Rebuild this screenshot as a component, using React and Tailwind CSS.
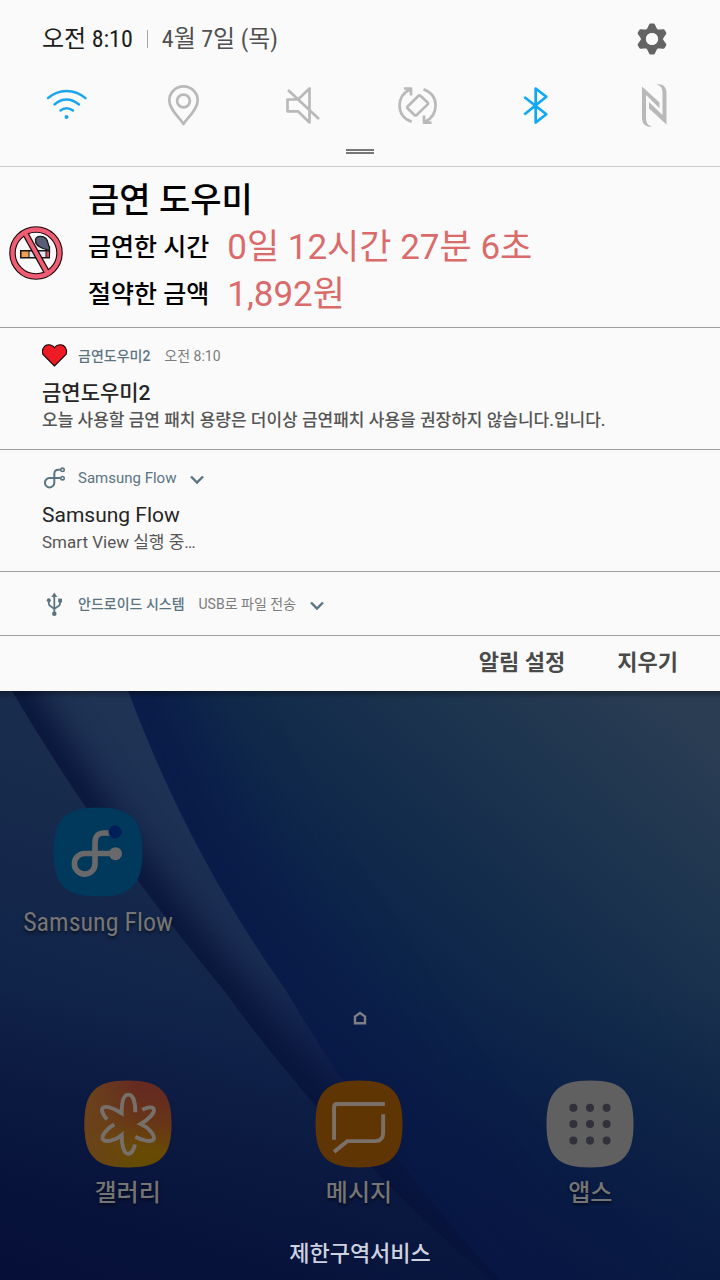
import React from "react";

const SQUIRCLE =
  "M45 0.5C78 0.5 89.5 12 89.5 45S78 89.5 45 89.5 0.5 78 0.5 45 12 0.5 45 0.5Z";

function QuickIcon({ label, viewBox, className, children }) {
  return (
    <button
      type="button"
      aria-label={label}
      className={`flex items-center justify-center ${className}`}
    >
      <svg
        viewBox={viewBox}
        className="size-11"
        fill="none"
        stroke="currentColor"
        strokeWidth="2.7"
        strokeLinejoin="round"
        aria-hidden="true"
      >
        {children}
      </svg>
    </button>
  );
}

function QuickSettings() {
  return (
    <div className="mt-[25px] grid grid-cols-6 px-2">
      <QuickIcon label="Wi-Fi" viewBox="45 83 44 44" className="text-[#1ba5ef]">
        <path strokeWidth="2.4" strokeLinecap="round" d="M48 98.2Q56 91 66.500 91T85.500 98.200M54.500 104.500Q60 99.500 66.500 99.500T79 104.500M60.500 110.500Q63 108.200 66.500 108.200T73 110.500" />
        <circle cx="66.500" cy="117" r="2" fill="currentColor" stroke="none" />
      </QuickIcon>
      <QuickIcon label="위치" viewBox="162 83 44 44" className="text-[#b9b9b9]">
        <path d="M183.500 124C179 117 169.300 109.500 169.300 100.500A14.200 14.200 0 0 1 197.700 100.500C197.700 109.500 188 117 183.500 124Z" />
        <circle cx="183.500" cy="101" r="6.400" />
      </QuickIcon>
      <QuickIcon label="음소거" viewBox="279 83 44 44" className="text-[#b9b9b9]">
        <path d="M287.500 99.500H298L309.500 88.500V122.500L298 111.300H287.500ZM288 90L319 119" />
      </QuickIcon>
      <QuickIcon label="자동 회전" viewBox="397 83 44 44" className="text-[#b9b9b9]">
        <path d="M411.700 121.800C404 119 399.600 113 399.600 105.500C399.600 98.500 403.500 92.500 410 89.500M404 88.500H411V95.500M423.500 89.200C431 92 435.600 98 435.600 105.300C435.600 112.500 431.500 118.500 425.500 121.500M431.500 122.700H424V115.500" />
        <path d="M418.300 96Q419.500 94.800 420.700 96L427.400 102.200Q428.600 103.400 427.400 104.600L416.800 114.900Q415.600 116 414.400 114.900L407.800 108.600Q406.700 107.400 407.800 106.200Z" />
      </QuickIcon>
      <QuickIcon label="블루투스" viewBox="514 83 44 44" className="text-[#0ea8f4]">
        <path d="M524.300 97L546.300 114.200L535.700 122.500V88.500L546.300 96.700L524.300 114.500" />
      </QuickIcon>
      <QuickIcon label="NFC" viewBox="631 83 44 44" className="text-[#b9b9b9]">
        <g fill="currentColor" stroke="none">
          <path d="M642 86.500L659.500 102.500V108.200L646 95V117C646 122.500 647.500 125.500 652 126.500C645.500 127.500 642 124 642 118Z" />
          <path d="M666.500 124.500L649 108.500V102L662.500 115V93C662.500 88 660.500 85.200 656.500 84.400C663 83.400 666.500 87 666.500 93Z" />
        </g>
      </QuickIcon>
    </div>
  );
}

function Gear() {
  return (
    <svg viewBox="-16 -16 32 32" className="size-8" fill="#646464" aria-hidden="true">
      {[0, 60, 120, 180, 240, 300].map((a) => (
        <path
          key={a}
          transform={`rotate(${a})`}
          d="M-5.500 -9L-3 -14.200Q-2.700 -15.500 -1.500 -15.500H1.500Q2.700 -15.500 3 -14.200L5.500 -9Z"
        />
      ))}
      <circle r="8.600" fill="none" stroke="#646464" strokeWidth="5" />
      <circle r="6.100" fill="#fafafa" />
    </svg>
  );
}

function NoSmoking() {
  return (
    <svg viewBox="0 0 54 54" className="size-[54px]" aria-hidden="true">
      <circle cx="27" cy="27" r="23.500" fill="#fafafa" stroke="#1a0508" strokeWidth="6.500" />
      <rect x="11" y="24" width="30" height="8.500" fill="#171717" />
      <rect x="12.500" y="25.500" width="7" height="5.500" fill="#f0a04e" />
      <rect x="20.500" y="25.500" width="16" height="5.500" fill="#dce9f5" />
      <rect x="37.500" y="25.500" width="2.500" height="5.500" fill="#e8475b" />
      <path d="M26.500 13.500C27.500 9.500 34 9.500 37 12.500C39.500 15 38.500 18.500 40.500 21V25.500C38.500 22.500 36.500 23.500 34 22.500C29.500 21 26 18 26.500 13.500Z" fill="#5a5d78" stroke="#171717" strokeWidth="1.300" />
      <path d="M16 7L38 46.500" stroke="#1a0508" strokeWidth="6.500" />
      <circle cx="27" cy="27" r="23.500" fill="none" stroke="#ee5d73" strokeWidth="4.300" />
      <path d="M16 7L38 46.500" stroke="#ee5d73" strokeWidth="4" />
    </svg>
  );
}

function Heart() {
  return (
    <svg viewBox="0 0 26 24" className="h-6 w-[26px]" aria-hidden="true">
      <path d="M12.500 22L1 10.500C-0.800 6 2 0.700 6.500 0.700C10 0.700 11.800 2.500 12.500 4C13.200 2.500 15 0.700 18.500 0.700C23 0.700 25.800 6 24 10.500Z" fill="#ed1c24" stroke="#160303" strokeWidth="1.100" />
    </svg>
  );
}

function FlowGlyph() {
  return (
    <svg viewBox="42 466 24 24" className="size-6" fill="none" stroke="#5b7482" strokeWidth="2" aria-hidden="true">
      <path d="M60.500 469.800H58.500Q54.300 469.800 54.300 474V482.500A4.700 4.700 0 1 1 49.500 478H60.500" />
      <circle cx="62.500" cy="469.800" r="1.700" strokeWidth="1.600" />
      <circle cx="62.500" cy="478.200" r="1.700" strokeWidth="1.600" />
    </svg>
  );
}

function UsbGlyph() {
  return (
    <svg viewBox="42 591 24 24" className="size-6" fill="#5b7482" stroke="#5b7482" aria-hidden="true">
      <path fill="none" strokeWidth="1.800" d="M54.300 595V612M48.800 599.500V602.500Q48.800 604 50 604.800L54.300 608L58.800 604.800Q60 604 60 602.500V599.500" />
      <path stroke="none" d="M54.300 591.500L57.300 596H51.300Z" />
      <circle cx="48.800" cy="599.300" r="2" stroke="none" />
      <rect x="58.200" y="597.600" width="3.800" height="3.800" stroke="none" />
      <circle cx="54.300" cy="612.700" r="2.300" stroke="none" />
    </svg>
  );
}

function Chevron() {
  return (
    <svg viewBox="0 0 14 10" className="mt-1 h-2.5 w-3.5" fill="none" stroke="#5b7482" strokeWidth="2.400" aria-hidden="true">
      <path d="M1 1.500L7 7.500L13 1.500" />
    </svg>
  );
}

function NoticeHead({ icon, app, detail, expandable, appClass = "text-[14px] font-medium" }) {
  return (
    <div className="flex h-6 items-center text-[14px] leading-6">
      <span className="flex w-9 shrink-0">{icon}</span>
      <span className={`text-[#5b7482] ${appClass}`}>{app}</span>
      {detail && <span className="ml-3.5 text-[#7c7c7c]">{detail}</span>}
      {expandable && (
        <button type="button" aria-label="펼치기" className="ml-3.5">
          <Chevron />
        </button>
      )}
    </div>
  );
}

function Notice({ title, body, textClass = "", ...head }) {
  return (
    <article className="border-b border-[#9c9c9c] px-[42px] pt-4 pb-[17px]">
      <NoticeHead {...head} />
      <h2 className={`mt-[11px] text-[21px] leading-7 text-[#252525] ${textClass}`}>{title}</h2>
      <p className={`mt-px text-[17px] leading-6 text-[#555555] ${textClass}`}>{body}</p>
    </article>
  );
}

const FOLD_LEFT = "M-60 -120L12 0Q100 150 224 300Q340 460 490 590L600 690";
const FOLD_RIGHT = "M82 -120L128 0Q190 165 286 300Q380 460 500 590L590 690";

function Wallpaper() {
  return (
    <svg
      viewBox="0 0 720 590"
      preserveAspectRatio="none"
      className="absolute inset-0 h-full w-full"
      aria-hidden="true"
    >
      <defs>
        <linearGradient id="sky" gradientUnits="userSpaceOnUse" x1="270" y1="400" x2="640" y2="-20">
          <stop offset="0" stopColor="#081a46" />
          <stop offset="0.25" stopColor="#0b2149" />
          <stop offset="0.5" stopColor="#122b4b" />
          <stop offset="0.75" stopColor="#1e354f" />
          <stop offset="1" stopColor="#2a3d53" />
        </linearGradient>
        <linearGradient id="left" gradientUnits="userSpaceOnUse" x1="180" y1="110" x2="20" y2="590">
          <stop offset="0" stopColor="#182c4d" />
          <stop offset="0.45" stopColor="#102349" />
          <stop offset="1" stopColor="#050c33" />
        </linearGradient>
        <linearGradient id="band" gradientUnits="userSpaceOnUse" x1="0" y1="0" x2="0" y2="590">
          <stop offset="0" stopColor="#1f3455" />
          <stop offset="0.45" stopColor="#1a2d52" />
          <stop offset="0.72" stopColor="#0b1d49" />
          <stop offset="1" stopColor="#08163f" />
        </linearGradient>
        <linearGradient id="fade" x1="0" y1="0" x2="0" y2="1">
          <stop offset="0.5" stopColor="#06123c" stopOpacity="0" />
          <stop offset="1" stopColor="#06123c" stopOpacity="0.5" />
        </linearGradient>
        <linearGradient id="shade" x1="0" y1="0" x2="0" y2="1">
          <stop offset="0" stopColor="#000" stopOpacity="0.3" />
          <stop offset="1" stopColor="#000" stopOpacity="0" />
        </linearGradient>
        <filter id="soft" colorInterpolationFilters="sRGB" filterUnits="userSpaceOnUse" x="-200" y="-200" width="1120" height="1000">
          <feGaussianBlur stdDeviation="16" />
        </filter>
        <filter id="softer" colorInterpolationFilters="sRGB" filterUnits="userSpaceOnUse" x="-200" y="-200" width="1120" height="1000">
          <feGaussianBlur stdDeviation="34" />
        </filter>
        <clipPath id="bandClip">
          <path d={`${FOLD_RIGHT}H-80V-120Z`} />
        </clipPath>
      </defs>
      <rect width="720" height="590" fill="url(#sky)" />
      <path d={FOLD_RIGHT} fill="none" stroke="#091b49" strokeWidth="90" filter="url(#softer)" />
      <g clipPath="url(#bandClip)">
        <rect width="720" height="590" fill="url(#band)" />
        <path d={FOLD_LEFT} fill="none" stroke="#09143a" strokeWidth="44" filter="url(#soft)" />
      </g>
      <path d={`${FOLD_LEFT}H-80V-120Z`} fill="url(#left)" />
      <rect width="720" height="590" fill="url(#fade)" />
      <rect width="720" height="8" fill="url(#shade)" />
    </svg>
  );
}

function AppIcon({ name, size, textClass, children }) {
  return (
    <button
      type="button"
      className={`flex flex-col items-center leading-8 text-[#757575] [text-shadow:0_2px_3px_rgba(0,0,0,0.6)] ${textClass}`}
    >
      <svg viewBox="0 0 90 90" className={size} aria-hidden="true">
        {children}
      </svg>
      <span className="mt-[9px]">{name}</span>
    </button>
  );
}

function HomeScreen() {
  return (
    <main className="relative flex-1">
      <Wallpaper />
      <div className="relative flex h-full flex-col">
        <div className="flex px-[18px] pt-[116px]">
          <div className="flex w-40 justify-center font-['Roboto_Condensed','Roboto','Noto_Sans_CJK_KR',sans-serif]">
            <AppIcon name="Samsung Flow" size="size-[90px]" textClass="text-[26px]">
              <path d={SQUIRCLE} fill="#00395b" />
              <g transform="translate(1.500 0)">
                <path d="M56 26H50C43 26 40.500 29 40.500 36V56.500A10.300 10.300 0 1 1 30.200 46.500H58" fill="none" stroke="#69696b" strokeWidth="5.600" />
                <circle cx="61" cy="46.700" r="6.500" fill="#69696b" />
                <circle cx="60.500" cy="25" r="6.500" fill="#001f59" />
              </g>
            </AppIcon>
          </div>
        </div>
        <div className="mt-[73px] flex justify-center">
          <svg viewBox="0 0 14 14" className="size-3.5" fill="none" stroke="#7c7f85" strokeWidth="2.400" aria-hidden="true">
            <path d="M2 12.300V5.500L7 2L12 5.500V12.300Z" />
          </svg>
        </div>
        <div className="mt-[55px] grid grid-cols-3 pr-3.5 pl-3">
          <AppIcon name="갤러리" size="size-[88px]" textClass="text-[24px] font-medium">
            <defs>
              <linearGradient id="gallery" x1="0.75" y1="0.1" x2="0.6" y2="1">
                <stop offset="0" stopColor="#652a20" />
                <stop offset="0.4" stopColor="#673518" />
                <stop offset="0.75" stopColor="#684a05" />
                <stop offset="1" stopColor="#644b02" />
              </linearGradient>
              <linearGradient id="galleryEdge" x1="0" y1="0.4" x2="0.6" y2="0.4">
                <stop offset="0" stopColor="#6b421c" />
                <stop offset="1" stopColor="#6b421c" stopOpacity="0" />
              </linearGradient>
            </defs>
            <path d={SQUIRCLE} fill="url(#gallery)" />
            <path d={SQUIRCLE} fill="url(#galleryEdge)" />
            <g transform="translate(1 0)" fill="none" stroke="#77706a" strokeWidth="4">
              <path d="M22.500 40.500C18 35 16 30.500 18.500 28.500C22 25.500 31 30 37.500 34C37.500 24 39 15 44.200 15C49.500 15 51.500 24 51.500 33" />
              <path d="M30 45.500C23 49 16 57 18.500 61C21.500 64 32 61.500 37.500 56.500C37.500 66 39.500 75.500 44.200 75.500C48 75.500 50.500 70 51 66" />
              <path d="M51.500 58C58 61.500 67 64 70 61C73 57 64 48 57 45C64 41 73 33 70 29C67.500 27 62 28.500 58.500 30.500" />
            </g>
          </AppIcon>
          <AppIcon name="메시지" size="size-[88px]" textClass="text-[24px] font-medium">
            <path d={SQUIRCLE} fill="#603504" />
            <path d="M19.500 61V28Q19.500 24.500 23 24.500H71.500M69.700 35V54Q69.700 62.500 61.500 62.500H33L19.500 73.500" fill="none" stroke="#7b7067" strokeWidth="4" />
          </AppIcon>
          <AppIcon name="앱스" size="size-[88px]" textClass="text-[24px] font-medium">
            <path d={SQUIRCLE} fill="#606060" />
            {[28.5, 45, 62].map((y) =>
              [28, 45, 62].map((x) => <circle key={`${x}-${y}`} cx={x} cy={y} r="4.100" fill="#30313a" />)
            )}
          </AppIcon>
        </div>
        <p className="mt-[29px] pb-2.5 text-center text-[22px] font-medium leading-8 text-[#cfd3e0]">제한구역서비스</p>
      </div>
    </main>
  );
}

export default function App() {
  return (
    <div
      lang="ko"
      className="flex min-h-screen flex-col bg-[#0a1c40] font-['Roboto','Noto_Sans_CJK_KR',sans-serif]"
    >
      <section className="bg-[#fafafa]">
        <header className="border-b border-[#cccccc] pt-5 pb-3">
          <div className="flex h-[38px] items-center pr-[52px] pl-[42px] font-['Roboto_Condensed','Roboto','Noto_Sans_CJK_KR',sans-serif] text-[24px] leading-8">
            <time className="text-[#1c1c1c]">오전 8:10</time>
            <span className="mx-3.5 h-[18px] w-px bg-[#a5a5a5]" />
            <span className="text-[#505050]">4월 7일 (목)</span>
            <button type="button" aria-label="설정" className="ml-auto">
              <Gear />
            </button>
          </div>
          <QuickSettings />
          <div className="mx-auto mt-[22px] h-[5px] w-7 border-y-2 border-[#777777]" />
        </header>

        <article className="flex items-center border-b border-[#9c9c9c] pt-2.5 pb-[9px] pl-[9px]">
          <div className="mt-2.5 w-[79px] shrink-0">
            <NoSmoking />
          </div>
          <div>
            <h2 className="text-[34px] font-medium leading-[47px] text-black">금연 도우미</h2>
            <dl className="grid grid-cols-[auto_1fr] gap-x-[18px] leading-[47px]">
              <dt className="text-[25px] font-medium text-black">금연한 시간</dt>
              <dd className="text-[35px] text-[#d96b6b]">0일 12시간 27분 6초</dd>
              <dt className="text-[25px] font-medium text-black">절약한 금액</dt>
              <dd className="text-[35px] text-[#d96b6b]">1,892원</dd>
            </dl>
          </div>
        </article>

        <Notice
          icon={<Heart />}
          app="금연도우미2"
          detail="오전 8:10"
          title="금연도우미2"
          textClass="font-medium"
          body="오늘 사용할 금연 패치 용량은 더이상 금연패치 사용을 권장하지 않습니다.입니다."
        />
        <Notice
          icon={<FlowGlyph />}
          app="Samsung Flow"
          appClass="text-[15px]"
          expandable
          title="Samsung Flow"
          body="Smart View 실행 중…"
        />
        <article className="border-b border-[#9c9c9c] px-[42px] pt-5 pb-[19px]">
          <NoticeHead icon={<UsbGlyph />} app="안드로이드 시스템" detail="USB로 파일 전송" expandable />
        </article>

        <footer className="flex h-[55px] items-center justify-end gap-[52px] px-[42px] pb-0.5 text-[22px] font-bold text-[#4a4a4a]">
          <button type="button">알림 설정</button>
          <button type="button">지우기</button>
        </footer>
      </section>
      <HomeScreen />
    </div>
  );
}
